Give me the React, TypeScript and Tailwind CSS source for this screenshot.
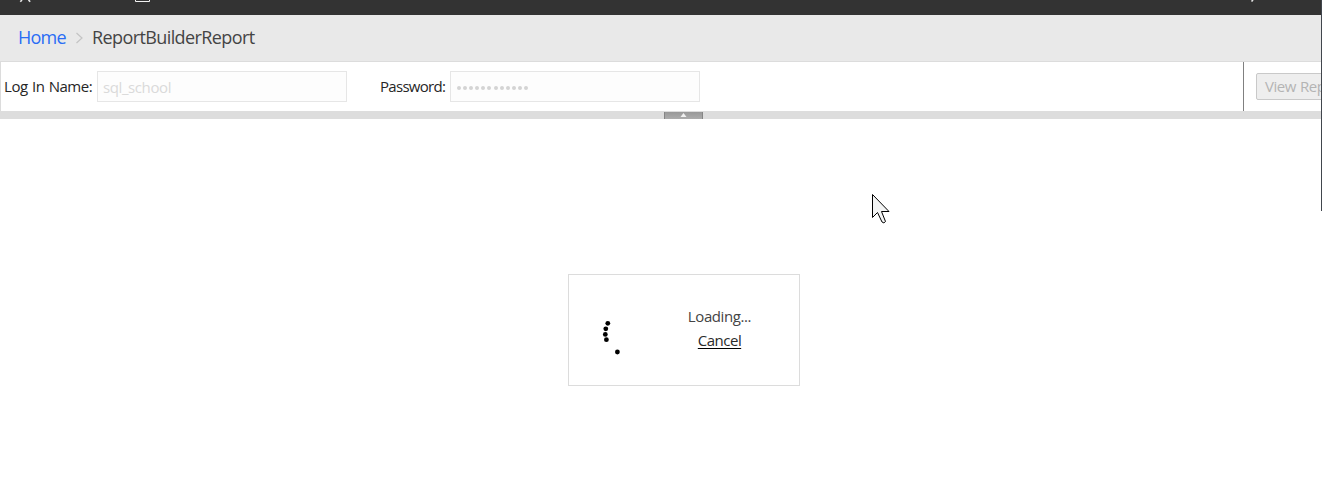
import React from "react";

function TopBar() {
  return (
    <header className="h-[15px] shrink-0 bg-[#333333] overflow-hidden">
      <svg className="block h-[15px] w-full" fill="none" aria-hidden="true">
        <path d="M20.3 1.8 L22 0 M30.2 1.8 L28.5 0" stroke="#e6e6e6" strokeWidth="1.6" />
        <path d="M135.5 0 V1.5 H149.5 V0" stroke="#f2f2f2" strokeWidth="1" />
        <path d="M1253 0 L1251.5 1.5" stroke="#e6e6e6" strokeWidth="1.6" />
      </svg>
    </header>
  );
}

function Breadcrumb() {
  return (
    <nav className="flex h-[47px] shrink-0 items-center border-b border-[#dcdcdc] bg-[#e9e9e9] pb-0.5 pl-[18px] text-[18px] leading-6">
      <a className="w-12 whitespace-nowrap text-[#2a6df5] tracking-[-0.75px]">Home</a>
      <svg className="ml-[9px] mr-2 mt-0.5 h-3 w-[9px] shrink-0" viewBox="0 0 9 12" fill="none">
        <path d="M1.5 1 L7 6 L1.5 11" stroke="#c4c4c4" strokeWidth="1.2" />
      </svg>
      <span className="whitespace-nowrap text-[#444444] tracking-[-0.6px]">ReportBuilderReport</span>
    </nav>
  );
}

function Parameters() {
  return (
    <section className="flex h-[49px] shrink-0 border-l border-[#dcdcdc] bg-white text-[15px] leading-5 text-[#262626]">
      <div className="flex w-[1242px] shrink-0 items-center pl-[3px]">
        <label className="w-[93px] shrink-0 whitespace-nowrap pb-0.5 tracking-[-0.45px] [word-spacing:0.8px]">Log In Name:</label>
        <div className="flex h-[31px] w-[250px] shrink-0 items-center border border-[#e6e6e6] bg-[#fdfdfd] pl-[5px] text-[#dadada] tracking-[-0.4px]">
          sql_school
        </div>
        <label className="ml-[33px] w-[70px] shrink-0 whitespace-nowrap pb-0.5 tracking-[-0.7px]">Password:</label>
        <div className="flex h-[31px] w-[250px] shrink-0 items-center gap-[2.1px] border border-[#e6e6e6] bg-[#fdfdfd] pl-[6px] pt-[3px]">
          {Array.from({ length: 12 }, (_, i) => (
            <span key={i} className="size-1 rounded-full bg-[#d4d4d4]" />
          ))}
        </div>
      </div>
      <div className="flex min-w-0 flex-1 items-start overflow-hidden border-l border-[#808080] pl-3 pt-[11px]">
        <button className="h-[27px] w-[96px] shrink-0 whitespace-nowrap rounded-[2px] border border-[#c9c9c9] bg-[#eeeeee] pb-0.5 pl-2 text-left text-[15px] leading-5 text-[#b4b4b4] tracking-[-0.5px] [word-spacing:0.8px]">
          View Report
        </button>
      </div>
    </section>
  );
}

function Splitter() {
  return (
    <div className="flex h-2 shrink-0 items-end bg-[#dddddd]">
      <div className="ml-[664px] flex h-[7px] w-[39px] justify-center border-x border-[#858585] bg-linear-to-b from-[#989898] to-[#acacac]">
        <svg className="h-[7px] w-[7px]" viewBox="0 0 7 7">
          <path d="M3.5 1 L6.5 5 H0.5 Z" fill="#f0f0f0" />
        </svg>
      </div>
    </div>
  );
}

function LoadingPanel() {
  return (
    <div className="ml-[568px] mt-[155px] flex h-[112px] w-[232px] border border-[#dcdcdc] bg-white text-[#444444]">
      <svg className="ml-[31px] mt-[44px] h-10 w-10 shrink-0" viewBox="600 319 40 40">
        <g fill="#000000">
          <circle cx="607.8" cy="323.3" r="2.4" />
          <circle cx="605.8" cy="328.8" r="2.4" />
          <circle cx="605.3" cy="334.4" r="2.4" />
          <circle cx="606.4" cy="339.7" r="2.4" />
          <circle cx="617.4" cy="352" r="2.4" />
        </g>
      </svg>
      <div className="ml-[39px] mt-[29px] flex w-[81px] flex-col items-center text-[15px] leading-6">
        <span className="tracking-[-0.4px]">Loading...</span>
        <a className="text-[#2b2b2b] underline decoration-black decoration-1 underline-offset-2 tracking-[-0.5px]">Cancel</a>
      </div>
    </div>
  );
}

export default function App() {
  return (
    <div className="relative flex h-[497px] w-[1322px] flex-col overflow-hidden bg-white font-['Open_Sans','Noto_Sans',sans-serif]">
      <TopBar />
      <Breadcrumb />
      <Parameters />
      <Splitter />
      <LoadingPanel />
      <div className="absolute right-0 top-0 h-[211px] w-px bg-[#41464d]" />
      <svg className="absolute left-[871px] top-[193px] h-8 w-5" viewBox="0 0 20 32">
        <path d="M1.5 1.5 V24.5 L6.5 19.5 L11 29 Q13 31 14.5 28.5 L10.5 18.5 H18 Z" fill="#f3f4f4" stroke="#000000" />
      </svg>
    </div>
  );
}
